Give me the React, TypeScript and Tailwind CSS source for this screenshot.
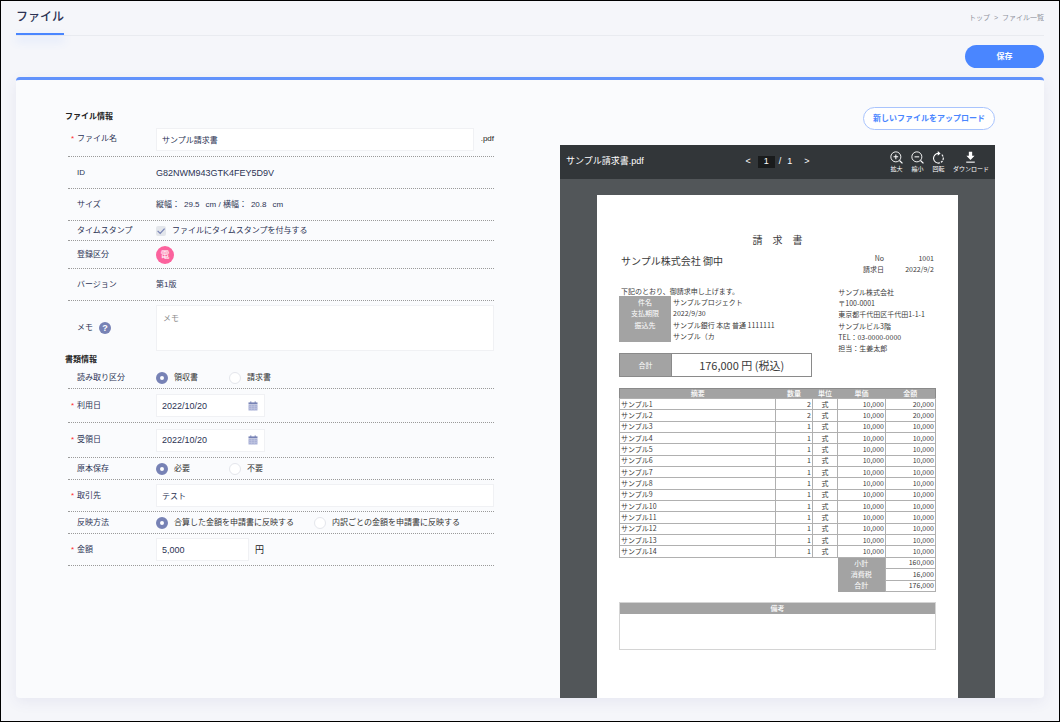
import { useState } from "react";
import type { ReactNode } from "react";

interface RowProps {
  label: string;
  htmlFor?: string;
  id?: string;
  required?: boolean;
  help?: boolean;
  className: string;
  children: ReactNode;
}

interface RadioGroupProps {
  name: string;
  labelledBy: string;
  options: string[];
  optionClass: string;
}

const items = [
  { name: "サンプル1", count: 2, amount: "20,000" },
  { name: "サンプル2", count: 2, amount: "20,000" },
  { name: "サンプル3", count: 1, amount: "10,000" },
  { name: "サンプル4", count: 1, amount: "10,000" },
  { name: "サンプル5", count: 1, amount: "10,000" },
  { name: "サンプル6", count: 1, amount: "10,000" },
  { name: "サンプル7", count: 1, amount: "10,000" },
  { name: "サンプル8", count: 1, amount: "10,000" },
  { name: "サンプル9", count: 1, amount: "10,000" },
  { name: "サンプル10", count: 1, amount: "10,000" },
  { name: "サンプル11", count: 1, amount: "10,000" },
  { name: "サンプル12", count: 1, amount: "10,000" },
  { name: "サンプル13", count: 1, amount: "10,000" },
  { name: "サンプル14", count: 1, amount: "10,000" },
];

const totals = [
  { label: "小計", amount: "160,000" },
  { label: "消費税", amount: "16,000" },
  { label: "合計", amount: "176,000" },
];

const issuer = [
  "サンプル株式会社",
  "〒100-0001",
  "東京都千代田区千代田1-1-1",
  "サンプルビル3階",
  "TEL：03-0000-0000",
  "担当：生姜太郎",
];

const inputClass =
  "h-[23px] min-w-0 border border-[#f0f1f4] bg-white px-[5px] text-[#2c3354] outline-none";

const Row = ({ label, htmlFor, id, required, help, className, children }: RowProps) => (
  <div className={`ml-[3px] flex items-center border-dotted border-[#9a9a9a] ${className}`}>
    <div className="flex w-[88px] shrink-0 items-center">
      <span className="w-[9px] pl-[3px] text-[#ff2d2d]">{required && "*"}</span>
      <label id={id} htmlFor={htmlFor}>
        {label}
      </label>
      {help && (
        <button
          type="button"
          aria-label="ヘルプ"
          className="ml-[6px] flex size-3 items-center justify-center rounded-full bg-[#7782b5] text-[9px] font-bold text-white"
        >
          ?
        </button>
      )}
    </div>
    <div className="flex min-w-0 flex-1 items-center">{children}</div>
  </div>
);

const RadioGroup = ({ name, labelledBy, options, optionClass }: RadioGroupProps) => {
  const [selected, setSelected] = useState(options[0]);

  return (
    <div role="radiogroup" aria-labelledby={labelledBy} className="flex text-[#333]">
      {options.map((option) => (
        <label key={option} className={`flex items-center gap-[6px] whitespace-nowrap ${optionClass}`}>
          <input
            type="radio"
            name={name}
            checked={selected === option}
            onChange={() => setSelected(option)}
            className="size-3 appearance-none rounded-full border border-[#e4e6ec] bg-white checked:border-4 checked:border-[#7782b5]"
          />
          {option}
        </label>
      ))}
    </div>
  );
};

const CalendarIcon = () => (
  <svg viewBox="0 0 10 10" className="size-[10px]" aria-hidden="true">
    <path d="M0.5 1.4h9v2h-9z" fill="#7782b5" />
    <path d="M0.5 3.8h9V9.5h-9z" fill="#a9b1d6" />
    <path d="M2.8 0.4v1.8M7.2 0.4v1.8" stroke="#7782b5" strokeWidth="1" />
    <path d="M0.5 5.6h9M0.5 7.5h9M3.6 3.8v5.7M6.4 3.8v5.7" stroke="#c6cbe5" strokeWidth="0.5" />
  </svg>
);

const DateField = ({ id, value }: { id: string; value: string }) => (
  <div className="flex h-[23px] w-[109px] items-center border border-[#f0f1f4] bg-white pr-[6px] pl-[5px]">
    <input
      id={id}
      type="text"
      defaultValue={value}
      className="min-w-0 flex-1 text-[9px] text-[#2c3354] outline-none"
    />
    <CalendarIcon />
  </div>
);

const ZoomIcon = ({ plus }: { plus?: boolean }) => (
  <svg viewBox="0 0 14 14" className="size-[13px]" fill="none" stroke="currentColor" aria-hidden="true">
    <circle cx="6.3" cy="6.3" r="5.4" strokeWidth="1" />
    <path d="M10.2 10.2l3.2 3.2" strokeWidth="1.3" />
    <path d={plus ? "M3.8 6.3h5M6.3 3.8v5" : "M3.8 6.3h5"} strokeWidth="1.1" />
  </svg>
);

const RotateIcon = () => (
  <svg viewBox="0 0 14 14" className="size-[13px]" fill="none" stroke="currentColor" aria-hidden="true">
    <path d="M7 2.6a5.2 5.2 0 1 0 1.6 10.1" strokeWidth="1.2" />
    <path d="M9.6 12.2A5.2 5.2 0 0 0 10.4 3.8" strokeWidth="1.2" strokeDasharray="2.4 1" />
    <path d="M6.2 0.1l3 2.5-3 2.5z" fill="currentColor" stroke="none" />
  </svg>
);

const DownloadIcon = () => (
  <svg viewBox="0 0 14 14" className="size-[13px]" fill="currentColor" aria-hidden="true">
    <path d="M5.2 0.8h3.6v4.4h2.6L7 9.6 2.6 5.2h2.6z" />
    <path d="M2.4 11.4h9.2v1.2H2.4z" />
  </svg>
);

const tools = [
  { label: "拡大", icon: <ZoomIcon plus /> },
  { label: "縮小", icon: <ZoomIcon /> },
  { label: "回転", icon: <RotateIcon /> },
  { label: "ダウンロード", icon: <DownloadIcon /> },
];

const FileForm = () => (
  <form className="pt-8 text-[8px] leading-[10px] text-[#2c3354]">
    <h2 className="mb-1 font-bold text-[#222]">ファイル情報</h2>
    <Row label="ファイル名" htmlFor="fileName" required className="h-[31px] border-b pb-1">
      <input id="fileName" type="text" defaultValue="サンプル請求書" className={`${inputClass} flex-1`} />
      <span className="w-5 text-right text-[#222]">.pdf</span>
    </Row>
    <Row label="ID" className="h-8 border-b">
      <span className="text-[9px]">G82NWM943GTK4FEY5D9V</span>
    </Row>
    <Row label="サイズ" className="h-8 border-b">
      <span>縦幅：</span>
      <span className="ml-1">29.5</span>
      <span className="ml-[6px]">cm / 横幅：</span>
      <span className="ml-1">20.8</span>
      <span className="ml-[6px]">cm</span>
    </Row>
    <Row label="タイムスタンプ" className="h-5 border-b">
      <label className="flex items-center gap-[6px]">
        <span className="grid size-[10px] rounded-xs bg-[#e3e6eb]">
          <input type="checkbox" defaultChecked className="peer col-start-1 row-start-1 size-[10px] appearance-none" />
          <svg
            viewBox="0 0 10 10"
            className="pointer-events-none invisible col-start-1 row-start-1 size-[10px] peer-checked:visible"
            fill="none"
            stroke="#7782b5"
            strokeWidth="1.2"
            aria-hidden="true"
          >
            <path d="M1.6 4.8l2.6 2.6L8.6 2.6" />
          </svg>
        </span>
        ファイルにタイムスタンプを付与する
      </label>
    </Row>
    <Row label="登録区分" className="h-7 border-b">
      <span className="flex size-[18px] items-center justify-center rounded-full bg-[#fb629d] text-[9px] text-white">
        電
      </span>
    </Row>
    <Row label="バージョン" className="h-8 border-b">
      第1版
    </Row>
    <Row label="メモ" htmlFor="memo" help className="h-[54px]">
      <textarea
        id="memo"
        placeholder="メモ"
        className="h-[46px] min-w-0 flex-1 resize-none border border-[#f0f1f4] bg-white px-[6px] py-2 outline-none placeholder:text-[#8c8c8c]"
      />
    </Row>
    <h2 className="mb-[2px] font-bold text-[#222]">書類情報</h2>
    <Row label="読み取り区分" id="docType" className="h-[22px] border-b">
      <RadioGroup name="docType" labelledBy="docType" options={["領収書", "請求書"]} optionClass="w-[73px]" />
    </Row>
    <Row label="利用日" htmlFor="usedOn" required className="h-[34px] border-b">
      <DateField id="usedOn" value="2022/10/20" />
    </Row>
    <Row label="受領日" htmlFor="receivedOn" required className="h-[35px] border-b">
      <DateField id="receivedOn" value="2022/10/20" />
    </Row>
    <Row label="原本保存" id="original" className="h-[22px] border-b">
      <RadioGroup name="original" labelledBy="original" options={["必要", "不要"]} optionClass="w-[73px]" />
    </Row>
    <Row label="取引先" htmlFor="client" required className="h-8 border-b">
      <input id="client" type="text" defaultValue="テスト" className={`${inputClass} flex-1`} />
    </Row>
    <Row label="反映方法" id="method" className="h-[22px] border-b">
      <RadioGroup
        name="method"
        labelledBy="method"
        options={["合算した金額を申請書に反映する", "内訳ごとの金額を申請書に反映する"]}
        optionClass="w-[158px]"
      />
    </Row>
    <Row label="金額" htmlFor="amount" required className="h-8 border-b">
      <input id="amount" type="text" defaultValue="5,000" className={`${inputClass} w-[93px] text-[9px]`} />
      <span className="ml-[6px] text-[9px] text-[#222]">円</span>
    </Row>
  </form>
);

const InvoiceSheet = () => (
  <div className="mx-[37px] mt-4 flex-1 bg-white px-[22px] pt-[38px] pb-12 font-['Noto_Sans_CJK_JP',sans-serif] text-[7px] leading-[10px] text-[#3a3a3a]">
    <h3 className="text-center text-[10px] leading-[14px]">請　求　書</h3>
    <div className="mt-[5px] flex justify-between">
      <p className="pl-[2px] text-[10px] leading-[18px]">サンプル株式会社 御中</p>
      <dl className="grid h-[23px] grid-cols-[auto_50px] items-center pr-[2px] text-right">
        <dt>No</dt>
        <dd>1001</dd>
        <dt>請求日</dt>
        <dd>2022/9/2</dd>
      </dl>
    </div>

    <div className="mt-[11px] grid grid-cols-[194fr_98fr] items-start gap-[26px] whitespace-nowrap">
      <div>
        <p className="pl-[2px]">下記のとおり、御請求申し上げます。</p>
        <div className="flex h-[46px]">
          <div className="grid w-[52px] grid-rows-4 items-center bg-[#a3a3a3] text-center text-white">
            <span>件名</span>
            <span>支払期限</span>
            <span>振込先</span>
          </div>
          <div className="grid grid-rows-4 items-center pl-[2px]">
            <span>サンプルプロジェクト</span>
            <span>2022/9/30</span>
            <span>サンプル銀行 本店 普通 1111111</span>
            <span>サンプル（カ</span>
          </div>
        </div>
        <div className="mt-[11px] flex h-6 items-stretch border border-[#8a8a8a]">
          <span className="flex w-[52px] items-center justify-center border-r border-[#8a8a8a] bg-[#a3a3a3] text-white">
            合計
          </span>
          <span className="flex flex-1 items-center justify-center text-[11px]">176,000 円 (税込)</span>
        </div>
      </div>
      <div className="grid h-[68px] grid-rows-6 items-center">
        {issuer.map((line) => (
          <span key={line}>{line}</span>
        ))}
      </div>
    </div>

    <table className="mt-[11px] h-[204px] w-full table-fixed border-collapse leading-[9px]">
      <colgroup>
        <col />
        <col className="w-[37px]" />
        <col className="w-[25px]" />
        <col className="w-[48px]" />
        <col className="w-[50px]" />
      </colgroup>
      <thead>
        <tr className="border border-[#8a8a8a] bg-[#a3a3a3] text-white">
          <th className="p-0 font-medium">摘要</th>
          <th className="p-0 font-medium">数量</th>
          <th className="p-0 font-medium">単位</th>
          <th className="p-0 font-medium">単価</th>
          <th className="p-0 font-medium">金額</th>
        </tr>
      </thead>
      <tbody>
        {items.map((item) => (
          <tr key={item.name}>
            <td className="border border-[#b0b0b0] py-0 pr-0 pl-[1px]">{item.name}</td>
            <td className="border border-[#b0b0b0] py-0 pr-[1px] pl-0 text-right">{item.count}</td>
            <td className="border border-[#b0b0b0] p-0 text-center">式</td>
            <td className="border border-[#b0b0b0] py-0 pr-[1px] pl-0 text-right">10,000</td>
            <td className="border border-[#b0b0b0] py-0 pr-[1px] pl-0 text-right">{item.amount}</td>
          </tr>
        ))}
        {totals.map((total) => (
          <tr key={total.label}>
            <td colSpan={3} className="p-0" />
            <th className="bg-[#a3a3a3] p-0 text-center font-normal text-white">{total.label}</th>
            <td className="border border-[#b0b0b0] py-0 pr-[1px] pl-0 text-right">{total.amount}</td>
          </tr>
        ))}
      </tbody>
    </table>

    <div className="mt-[10px] h-12 border border-[#d4d4d4]">
      <p className="bg-[#a3a3a3] text-center leading-[11px] font-medium text-white">備考</p>
    </div>
  </div>
);

const PdfViewer = () => (
  <section className="mt-[15px] flex flex-1 flex-col bg-[#525659]">
    <div className="grid h-[34px] grid-cols-[1fr_auto_1fr] items-center bg-[#323639] px-[6px] text-white">
      <span className="text-[9px]">サンプル請求書.pdf</span>
      <div className="flex items-center text-[9px]">
        <button type="button" aria-label="前のページ">&lt;</button>
        <input
          type="text"
          aria-label="ページ"
          defaultValue="1"
          className="mr-1 ml-[7px] h-3 w-[17px] bg-[#191b1c] text-center outline-none"
        />
        <span>/</span>
        <span className="ml-[6px]">1</span>
        <button type="button" aria-label="次のページ" className="ml-3">&gt;</button>
      </div>
      <div className="flex justify-end gap-2">
        {tools.map((tool) => (
          <button key={tool.label} type="button" className="flex flex-col items-center text-[6px] leading-[8px]">
            {tool.icon}
            <span className="mt-[1px]">{tool.label}</span>
          </button>
        ))}
      </div>
    </div>
    <InvoiceSheet />
  </section>
);

export default function App() {
  return (
    <div className="flex min-h-screen flex-col border border-black bg-[#f5f6fa] px-[15px] pb-[23px] font-['Liberation_Sans','Noto_Sans_CJK_JP',sans-serif] text-[#2c3354]">
      <header className="flex h-[35px] items-stretch justify-between border-b border-[#e9ebf0]">
        <div className="flex flex-col">
          <h1 className="flex flex-1 items-center text-[12px] font-medium">ファイル</h1>
          <span className="h-[2px] bg-[#4a86ff] shadow-[0_5px_10px_rgba(74,134,255,0.3)]" />
        </div>
        <nav className="flex items-center gap-1 text-[7px] text-[#8f929c]">
          <a href="#top">トップ</a>
          <span>&gt;</span>
          <a href="#files">ファイル一覧</a>
        </nav>
      </header>

      <div className="flex justify-end py-[9px]">
        <button type="button" className="h-[23px] w-[79px] rounded-full bg-[#4a86ff] text-[8px] font-bold text-white">
          保存
        </button>
      </div>

      <main className="grid flex-1 grid-cols-[429fr_435fr] gap-[66px] rounded-sm border-t-3 border-[#6192fb] bg-[#fafbfd] px-[49px] shadow-[0_4px_14px_rgba(60,70,140,0.08)]">
        <FileForm />
        <div className="flex flex-col pt-[27px]">
          <button
            type="button"
            className="h-[23px] w-[132px] self-end rounded-full border border-[#a9c4fd] bg-white text-[8px] font-bold text-[#4a86ff]"
          >
            新しいファイルをアップロード
          </button>
          <PdfViewer />
        </div>
      </main>
    </div>
  );
}
